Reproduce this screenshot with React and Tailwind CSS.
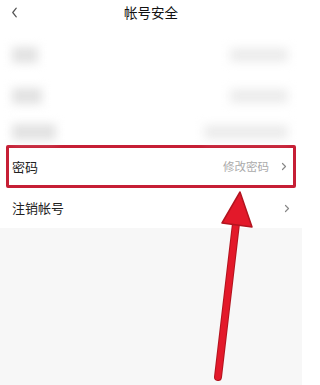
import React from 'react';

const font = { fontFamily: '"Noto Sans CJK SC", "Noto Sans", sans-serif' };

function Chevron({ className }) {
  return (
    <svg viewBox="0 0 8 12" className={className} fill="none" stroke="currentColor" strokeWidth="1.6" strokeLinecap="round" strokeLinejoin="round">
      <path d="M2 2l4 4-4 4" />
    </svg>
  );
}

// blurred-out rows above the highlighted one
function BlurRow({ left, right, h }) {
  return (
    <div className={`flex items-center justify-between px-[10px] ${h}`}>
      <div className={`h-[16px] bg-[#e2e2e2] blur-[5px] ${left}`} />
      <div className={`h-[14px] bg-[#ececec] blur-[5px] ${right}`} />
    </div>
  );
}

export default function App() {
  return (
    <div className="relative w-[302px] h-[385px] overflow-hidden bg-[#f7f7f7]" style={font}>
      {/* header */}
      <div className="relative flex items-center justify-center h-[26px] bg-white">
        <svg viewBox="0 0 8 12" className="absolute left-[11px] top-[7px] w-[7px] h-[11px] text-[#555]" fill="none" stroke="currentColor" strokeWidth="1.4" strokeLinecap="round" strokeLinejoin="round">
          <path d="M6 1L2 6l4 5" />
        </svg>
        <span className="text-[13.5px] text-[#111] leading-none">帐号安全</span>
      </div>

      <div className="bg-white">
        <div className="pt-[8px]">
          <BlurRow h="h-[42px]" left="w-[26px] ml-[2px]" right="w-[58px] mr-[4px]" />
          <BlurRow h="h-[40px]" left="w-[30px] ml-[2px]" right="w-[58px] mr-[4px]" />
          <BlurRow h="h-[32px]" left="w-[44px] ml-[2px]" right="w-[84px] mr-[4px]" />
        </div>

        {/* password row, highlighted */}
        <div className="mx-[6px] mt-[-3px] h-[43px] border-[3px] border-[#c61f35] rounded-[2px] flex items-center justify-between pl-[3px] pr-[6px]">
          <span className="text-[13px] text-[#222]">密码</span>
          <div className="flex items-center gap-[12px]">
            <span className="text-[11.5px] text-[#aaa]">修改密码</span>
            <Chevron className="w-[6px] h-[9px] text-[#888]" />
          </div>
        </div>

        <div className="h-[40px] flex items-center justify-between pl-[12px] pr-[12px]">
          <span className="text-[13px] text-[#222]">注销帐号</span>
          <Chevron className="w-[6px] h-[9px] text-[#888]" />
        </div>
      </div>

      {/* annotation arrow */}
      <svg className="absolute left-0 top-0 w-[302px] h-[385px] pointer-events-none" viewBox="0 0 302 385">
        <line x1="237" y1="215" x2="218" y2="377" stroke="#b3141f" strokeWidth="8" strokeLinecap="round" />
        <line x1="237" y1="215" x2="218" y2="377" stroke="#e3192a" strokeWidth="6" strokeLinecap="round" />
        <path d="M240 192 L222 223 L252 227 Z" fill="#e3192a" stroke="#b3141f" strokeWidth="1.5" strokeLinejoin="round" />
      </svg>
    </div>
  );
}
